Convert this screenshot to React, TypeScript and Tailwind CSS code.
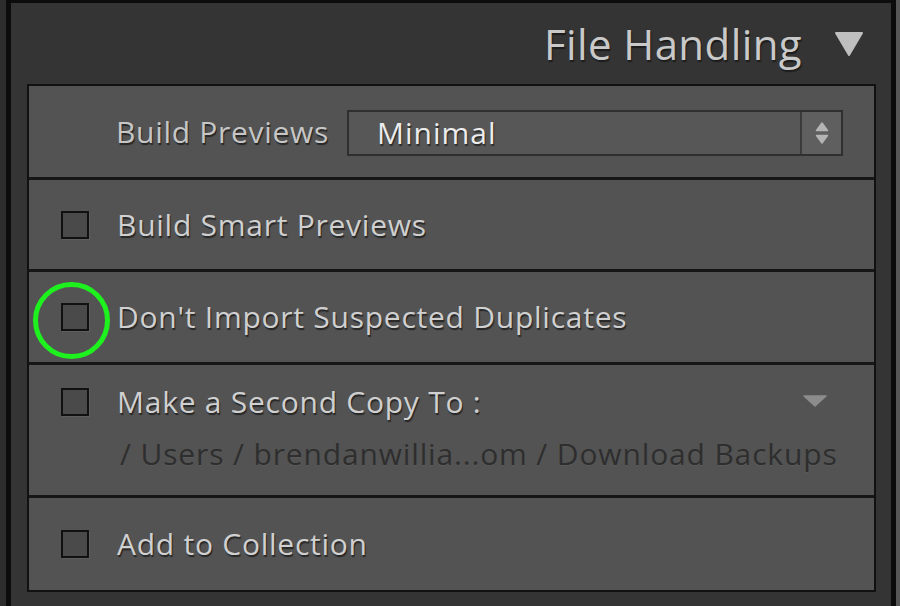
import React from 'react';

const font = { fontFamily: '"Open Sans", "Noto Sans", sans-serif' };

function Checkbox({ children }: { children?: React.ReactNode }) {
  return (
    <div className="relative h-[28px] w-[28px] shrink-0 border-2 border-[#111] bg-[#4a4a4a] shadow-[1px_1px_0_#5e5e5e]">
      {children}
    </div>
  );
}

function CheckRow({
  label,
  height,
  circled,
}: {
  label: string;
  height: string;
  circled?: boolean;
}) {
  return (
    <div className={`flex items-center pl-[32px] ${height}`}>
      <Checkbox>
        {circled && (
          <div className="absolute left-[-30px] top-[-23px] h-[77px] w-[77px] rounded-full border-[5px] border-[#1ef21e]" />
        )}
      </Checkbox>
      <span className="ml-[28px] text-[30px] leading-none tracking-[0.75px] text-[#d0d0d0] [text-shadow:1px_2px_1px_#262626]">
        {label}
      </span>
    </div>
  );
}

function Divider() {
  return <div className="h-[3px] bg-[#161616]" />;
}

export default function App() {
  return (
    <div className="flex h-[606px] w-[900px] overflow-hidden bg-[#2c2c2c]" style={font}>
      <div className="w-[6px] shrink-0 bg-[#2d2d2d]" />
      <div className="w-[5px] shrink-0 bg-[#0c0c0c]" />
      <div className="flex min-w-0 flex-1 flex-col border-t-[3px] border-[#0c0c0c] bg-[#343434] pl-[16px] pr-[15px]">
        <div className="flex h-[81px] items-center justify-end pr-[12px]">
          <span className="text-[42px] leading-none tracking-[0.4px] text-[#c9c9c9] [text-shadow:1px_2px_1px_#1c1c1c]">
            File Handling
          </span>
          <svg width="30" height="26" viewBox="0 0 30 26" className="ml-[32px]">
            <path d="M2 2 H28 L15 24 Z" fill="#bfbfbf" stroke="#bfbfbf" strokeWidth="2" strokeLinejoin="round" />
          </svg>
        </div>

        <div className="flex min-w-0 flex-1 flex-col border-2 border-[#111] bg-[#535353]">
          <div className="flex h-[91px] items-center pl-[87px] pr-[31px]">
            <span className="text-[30px] leading-none tracking-[0.7px] text-[#c6c6c6] [text-shadow:1px_2px_1px_#262626]">
              Build Previews
            </span>
            <div className="ml-[18px] mt-[3px] flex h-[46px] flex-1 border-2 border-[#2f2f2f] bg-[#575757]">
              <span className="flex flex-1 items-center pl-[28px] text-[30px] leading-none tracking-[1px] text-[#ececec] [text-shadow:1px_2px_1px_#2a2a2a]">
                Minimal
              </span>
              <div className="flex w-[41px] items-center justify-center border-l-2 border-[#3a3a3a] bg-[#5f5f5f]">
                <svg width="14" height="24" viewBox="0 0 14 24">
                  <path d="M7 2 L12.5 9.5 H1.5 Z" fill="#b4b4b4" stroke="#b4b4b4" strokeWidth="1.5" strokeLinejoin="round" />
                  <path d="M1.5 14.5 H12.5 L7 22 Z" fill="#b4b4b4" stroke="#b4b4b4" strokeWidth="1.5" strokeLinejoin="round" />
                </svg>
              </div>
            </div>
          </div>
          <Divider />
          <CheckRow label="Build Smart Previews" height="h-[89px]" />
          <Divider />
          <CheckRow label="Don't Import Suspected Duplicates" height="h-[90px]" circled />
          <Divider />
          <div className="flex h-[130px] flex-col pl-[32px] pr-[46px] pt-[22px]">
            <div className="flex items-center">
              <Checkbox />
              <span className="ml-[28px] flex-1 text-[30px] leading-none tracking-[0.75px] text-[#d0d0d0] [text-shadow:1px_2px_1px_#262626]">
                Make a Second Copy To :
              </span>
              <svg width="26" height="14" viewBox="0 0 26 14" className="mb-[2px]">
                <path d="M2 2 H24 L13 12 Z" fill="#8c8c8c" stroke="#8c8c8c" strokeWidth="1.5" strokeLinejoin="round" />
              </svg>
            </div>
            <span className="ml-[59px] mt-[22px] whitespace-nowrap text-[30px] leading-none tracking-[0.85px] text-[#2e2e2e] [text-shadow:0_1px_0_#5a5a5a]">
              / Users / brendanwillia...om / Download Backups
            </span>
          </div>
          <Divider />
          <CheckRow label="Add to Collection" height="flex-1" />
        </div>
        <div className="h-[14px]" />
      </div>
      <div className="w-[5px] shrink-0 bg-[#0c0c0c]" />
      <div className="w-[4px] shrink-0 bg-[#575757]" />
    </div>
  );
}
